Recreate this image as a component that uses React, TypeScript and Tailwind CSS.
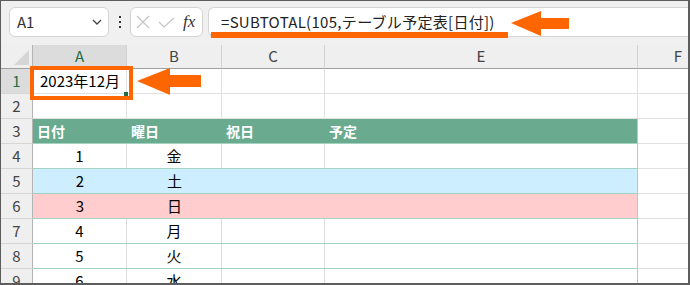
import React from "react";

const font = { fontFamily: '"Noto Sans CJK JP", "Noto Sans", sans-serif' };

// column widths: row header, A, B, C, E, F
const cols = "grid-cols-[32px_94px_95px_103px_313px_50px]";

type Row = { n: number; day: string; bg?: string };

const rows: Row[] = [
  { n: 1, day: "金" },
  { n: 2, day: "土", bg: "bg-[#cdeeff]" },
  { n: 3, day: "日", bg: "bg-[#ffcdcd]" },
  { n: 4, day: "月" },
  { n: 5, day: "火" },
  { n: 6, day: "水" },
];

const RowHead = ({ n, active }: { n: number; active?: boolean }) => (
  <div
    className={`h-[25px] flex items-center justify-center border-r border-b border-r-[#b4b4b4] border-b-[#d6d6d6] text-[15px] ${
      active ? "bg-[#dcdcdc] text-[#1f6e43]" : "bg-[#efefef] text-[#444]"
    }`}
  >
    {n}
  </div>
);

export default function App() {
  return (
    <div
      className="relative w-[690px] h-[285px] overflow-hidden bg-[#f0f0f0] border-t border-l border-r-2 border-b-2 border-[#5d5d5d] text-black"
      style={font}
    >
      {/* formula bar */}
      <div className="h-[44px] flex items-start pt-[6px] pl-[8px]">
        <div className="w-[100px] h-[30px] bg-white border border-[#d4d4d4] rounded-md flex items-center justify-between pl-[7px] pr-[6px]">
          <span className="text-[15px] text-[#333]">A1</span>
          <svg width="10" height="6" viewBox="0 0 10 6">
            <path d="M1 1 L5 5 L9 1" fill="none" stroke="#444" strokeWidth="1.3" />
          </svg>
        </div>
        <div className="w-[21px] h-[30px] flex flex-col items-center justify-center gap-[3px]">
          <span className="w-[2px] h-[2px] bg-[#333]" />
          <span className="w-[2px] h-[2px] bg-[#333]" />
          <span className="w-[2px] h-[2px] bg-[#333]" />
        </div>
        <div className="w-[73px] h-[30px] bg-white border border-[#d4d4d4] rounded-md flex items-center pl-[5px] gap-[8px]">
          <svg width="14" height="14" viewBox="0 0 14 14">
            <path d="M1 1 L13 13 M13 1 L1 13" stroke="#c4c4c4" strokeWidth="1.2" />
          </svg>
          <svg width="17" height="11" viewBox="0 0 17 11">
            <path d="M1 5 L6 10 L16 1" fill="none" stroke="#c4c4c4" strokeWidth="1.2" />
          </svg>
          <span
            className="italic text-[17px] text-[#333] leading-none -mt-[2px]"
            style={{ fontFamily: '"Liberation Serif", serif' }}
          >
            fx
          </span>
        </div>
        <div className="flex-1 ml-[5px] h-[30px] bg-white border border-r-0 border-[#d4d4d4] rounded-l-md flex items-center pl-[12px]">
          <span className="text-[15px] text-[#222] tracking-[0.3px]">
            =SUBTOTAL(105,テーブル予定表[日付])
          </span>
        </div>
      </div>

      {/* sheet grid */}
      <div className={`grid ${cols} bg-white`}>
        {/* column headers */}
        <div className="h-[24px] bg-[#efefef] border-r border-b border-r-[#b4b4b4] border-b-[#9f9f9f] flex items-end justify-end p-[3px]">
          <svg width="15" height="15" viewBox="0 0 15 15">
            <path d="M15 0 L15 15 L0 15 Z" fill="#d6d6d6" />
          </svg>
        </div>
        {["A", "B", "C", "E", "F"].map((c, i) => (
          <div
            key={c}
            className={`h-[24px] flex items-center border-b border-b-[#9f9f9f] text-[15px] ${
              i === 0 ? "bg-[#dcdcdc] text-[#1f6e43]" : "bg-[#efefef] text-[#444]"
            } ${i === 4 ? "justify-end pr-[6px]" : "justify-center border-r border-r-[#d2d2d2]"}`}
          >
            {c}
          </div>
        ))}

        {/* row 1 */}
        <RowHead n={1} active />
        <div className="h-[25px] border-r border-b border-[#e1e1e1] flex items-center pl-[7px] text-[15px]">
          2023年12月
        </div>
        <div className="h-[25px] border-r border-b border-[#e1e1e1]" />
        <div className="h-[25px] border-r border-b border-[#e1e1e1]" />
        <div className="h-[25px] border-r border-b border-[#e1e1e1]" />
        <div className="h-[25px] border-b border-[#e1e1e1]" />

        {/* row 2 */}
        <RowHead n={2} />
        <div className="h-[25px] border-r border-b border-[#e1e1e1]" />
        <div className="h-[25px] border-r border-b border-[#e1e1e1]" />
        <div className="h-[25px] border-r border-b border-[#e1e1e1]" />
        <div className="h-[25px] border-r border-b border-[#e1e1e1]" />
        <div className="h-[25px] border-b border-[#e1e1e1]" />

        {/* row 3: table header */}
        <RowHead n={3} />
        <div className="col-span-4 h-[25px] bg-[#6aab8f] border-r border-b border-[#a3d2c0] grid grid-cols-[94px_95px_103px_1fr] text-white font-bold text-[14px]">
          <span className="flex items-center pl-[4px]">日付</span>
          <span className="flex items-center pl-[4px]">曜日</span>
          <span className="flex items-center pl-[4px]">祝日</span>
          <span className="flex items-center pl-[4px]">予定</span>
        </div>
        <div className="h-[25px] border-b border-[#e1e1e1]" />

        {/* table rows */}
        {rows.map((r, i) => (
          <React.Fragment key={r.n}>
            <RowHead n={i + 4} />
            <div
              className={`col-span-4 h-[25px] border-r border-b border-[#a3d2c0] grid grid-cols-[94px_95px_103px_1fr] text-[15px] ${
                r.bg ?? "bg-white"
              }`}
            >
              <span className={`flex items-center justify-center ${r.bg ? "" : "border-r border-[#dcdcdc]"}`}>
                {r.n}
              </span>
              <span className={`flex items-center justify-center ${r.bg ? "" : "border-r border-[#dcdcdc]"}`}>
                {r.day}
              </span>
              <span className={r.bg ? "" : "border-r border-[#dcdcdc]"} />
              <span />
            </div>
            <div className="h-[25px] border-b border-[#e1e1e1]" />
          </React.Fragment>
        ))}
      </div>

      {/* annotations */}
      <div className="absolute left-[29px] top-[65px] w-[103px] h-[34px] border-[4px] border-[#ff6600]" />
      <div className="absolute left-[123px] top-[91px] w-[4px] h-[4px] bg-[#1f6e43]" />
      <div className="absolute left-[210px] top-[31px] w-[297px] h-[6px] bg-[#ff6600]" />
      <svg className="absolute left-[135px] top-[66px]" width="66" height="30" viewBox="0 0 66 30">
        <path d="M1 14 L34 1 L34 8 L65 8 L65 20 L34 20 L34 28 Z" fill="#ff6600" />
      </svg>
      <svg className="absolute left-[509px] top-[9px]" width="60" height="27" viewBox="0 0 60 27">
        <path d="M1 13 L31 1 L31 8 L59 8 L59 19 L31 19 L31 26 Z" fill="#ff6600" />
      </svg>
    </div>
  );
}
